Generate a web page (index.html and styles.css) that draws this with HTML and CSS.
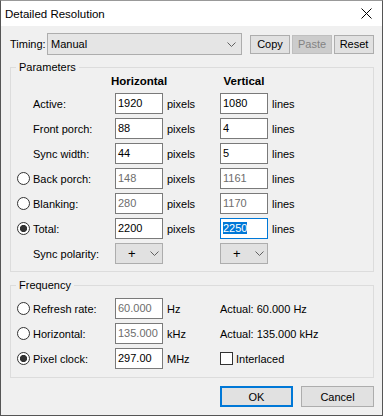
FILE: index.html
```html
<!DOCTYPE html>
<html lang="en">
<head>
    <meta charset="UTF-8">
    <meta name="viewport" content="width=device-width, initial-scale=1.0">
    <title>Detailed Resolution</title>
    <link rel="stylesheet" href="styles.css">
</head>
<body>
    <div class="window">
        <div class="titlebar">
            <span class="title">Detailed Resolution</span>
            <svg class="close" width="11" height="11" viewBox="0 0 11 11">
                <path d="M0.5 0.5 L10.5 10.5 M10.5 0.5 L0.5 10.5" stroke="#000" stroke-width="1" fill="none"/>
            </svg>
        </div>

        <div class="content">
            <div class="timing-row">
                <span class="timing-label">Timing:</span>
                <div class="combo">
                    <span>Manual</span>
                    <svg class="chevron" width="9" height="5" viewBox="0 0 9 5">
                        <polyline points="0.5,0.5 4.5,4.5 8.5,0.5" stroke="#606060" fill="none"/>
                    </svg>
                </div>
                <button class="btn small">Copy</button>
                <button class="btn small" disabled>Paste</button>
                <button class="btn small">Reset</button>
            </div>

            <fieldset class="group params">
                <legend>Parameters</legend>
                <div class="grid">
                    <span></span>
                    <span></span>
                    <span class="col-head">Horizontal</span>
                    <span></span>
                    <span class="col-head">Vertical</span>
                    <span></span>

                    <span></span>
                    <span>Active:</span>
                    <div class="edit">1920</div>
                    <span class="unit">pixels</span>
                    <div class="edit">1080</div>
                    <span class="unit">lines</span>

                    <span></span>
                    <span>Front porch:</span>
                    <div class="edit">88</div>
                    <span class="unit">pixels</span>
                    <div class="edit">4</div>
                    <span class="unit">lines</span>

                    <span></span>
                    <span>Sync width:</span>
                    <div class="edit">44</div>
                    <span class="unit">pixels</span>
                    <div class="edit">5</div>
                    <span class="unit">lines</span>

                    <span class="radio"></span>
                    <span>Back porch:</span>
                    <div class="edit ro">148</div>
                    <span class="unit">pixels</span>
                    <div class="edit ro">1161</div>
                    <span class="unit">lines</span>

                    <span class="radio"></span>
                    <span>Blanking:</span>
                    <div class="edit ro">280</div>
                    <span class="unit">pixels</span>
                    <div class="edit ro">1170</div>
                    <span class="unit">lines</span>

                    <span class="radio checked"></span>
                    <span>Total:</span>
                    <div class="edit">2200</div>
                    <span class="unit">pixels</span>
                    <div class="edit focus"><span class="sel">2250</span></div>
                    <span class="unit">lines</span>

                    <span></span>
                    <span>Sync polarity:</span>
                    <div class="drop">
                        <span class="sign">+</span>
                        <svg class="chevron" width="9" height="5" viewBox="0 0 9 5">
                            <polyline points="0.5,0.5 4.5,4.5 8.5,0.5" stroke="#606060" fill="none"/>
                        </svg>
                    </div>
                    <span></span>
                    <div class="drop">
                        <span class="sign">+</span>
                        <svg class="chevron" width="9" height="5" viewBox="0 0 9 5">
                            <polyline points="0.5,0.5 4.5,4.5 8.5,0.5" stroke="#606060" fill="none"/>
                        </svg>
                    </div>
                    <span></span>
                </div>
            </fieldset>

            <fieldset class="group freq">
                <legend>Frequency</legend>
                <div class="grid">
                    <span class="radio"></span>
                    <span>Refresh rate:</span>
                    <div class="edit ro">60.000</div>
                    <span class="unit">Hz</span>
                    <span>Actual: 60.000 Hz</span>

                    <span class="radio"></span>
                    <span>Horizontal:</span>
                    <div class="edit ro">135.000</div>
                    <span class="unit">kHz</span>
                    <span>Actual: 135.000 kHz</span>

                    <span class="radio checked"></span>
                    <span>Pixel clock:</span>
                    <div class="edit">297.00</div>
                    <span class="unit">MHz</span>
                    <span class="check-wrap"><span class="checkbox"></span>Interlaced</span>
                </div>
            </fieldset>

            <div class="button-row">
                <button class="btn big default">OK</button>
                <button class="btn big">Cancel</button>
            </div>
        </div>
    </div>
</body>
</html>
```

FILE: styles.css
```css
* {
    box-sizing: border-box;
}
body {
    margin: 0;
    background: #fff;
    font-family: "Liberation Sans", Arial, sans-serif;
    font-size: 11px;
    color: #000;
}
.window {
    width: 383px;
    height: 416px;
    border: 1px solid #555;
    border-top-color: #999;
    background: #f0f0f0;
}
.titlebar {
    height: 25px;
    background: #fff;
    display: flex;
    align-items: center;
    justify-content: space-between;
    padding: 0 10px 0 4px;
}
.title {
    font-size: 11.5px;
}
.close {
    display: block;
}
.content {
    padding: 7px 8px 0 9px;
}

/* top row */
.timing-row {
    display: flex;
    align-items: flex-start;
    height: 22px;
}
.timing-label {
    width: 37px;
    line-height: 22px;
}
.combo {
    width: 195px;
    height: 22px;
    margin-right: 8px;
    background: #e5e5e5;
    border: 1px solid #adadad;
    display: flex;
    align-items: center;
    justify-content: space-between;
    padding: 0 5px 0 3px;
}
.chevron {
    display: block;
}
.btn {
    font-family: inherit;
    font-size: 11px;
    color: #000;
    background: #e1e1e1;
    border: 1px solid #adadad;
    padding: 0;
    margin: 0;
}
.btn.small {
    width: 40px;
    height: 19px;
    margin-top: 2px;
    line-height: 17px;
}
.btn.small + .btn.small {
    margin-left: 2px;
}
.btn:disabled {
    background: #cccccc;
    border-color: #bfbfbf;
    color: #838383;
}

/* group boxes */
.group {
    margin: 6px 0 0 0;
    padding: 0 0 7px 0;
    border: 1px solid #dcdcdc;
    min-width: 0;
}
.group legend {
    margin-left: 5px;
    padding: 0 3px;
    line-height: 12px;
}
.grid {
    display: grid;
    grid-template-columns: 22px 82px 48px 57px 48px 1fr;
    grid-auto-rows: 21px;
    row-gap: 4px;
    align-items: center;
}
.params .grid {
    grid-template-rows: 16px;
}
.freq {
    margin-top: 7px;
    padding: 7px 0 8px 0;
}
.freq .grid {
    grid-template-columns: 22px 82px 48px 57px 1fr;
}
.col-head {
    font-weight: bold;
    font-size: 11.5px;
    justify-self: center;
}
.unit {
    padding-left: 4px;
}

/* fields */
.edit {
    height: 21px;
    background: #fff;
    border: 1px solid #7a7a7a;
    padding: 0 2px;
    line-height: 19px;
    white-space: nowrap;
}
.edit.ro {
    color: #6d6d6d;
}
.edit.focus {
    border-color: #0078d7;
}
.sel {
    background: #0078d7;
    color: #fff;
}
.drop {
    height: 21px;
    background: #e1e1e1;
    border: 1px solid #adadad;
    display: flex;
    align-items: center;
    padding-left: 12px;
}
.drop .sign {
    width: 22px;
    font-size: 13px;
}
.radio {
    width: 13px;
    height: 13px;
    margin-left: 6px;
    border: 1px solid #333;
    border-radius: 50%;
    background: #fff;
}
.radio.checked {
    background: radial-gradient(circle, #333 0 3.3px, #fff 3.9px);
}
.check-wrap {
    display: flex;
    align-items: center;
    gap: 3px;
}
.checkbox {
    width: 13px;
    height: 13px;
    border: 1px solid #333;
    background: #fff;
}

/* bottom buttons */
.button-row {
    display: flex;
    justify-content: flex-end;
    gap: 8px;
    margin-top: 8px;
}
.btn.big {
    width: 73px;
    height: 21px;
}
.btn.default {
    border: 2px solid #0078d7;
}
```
